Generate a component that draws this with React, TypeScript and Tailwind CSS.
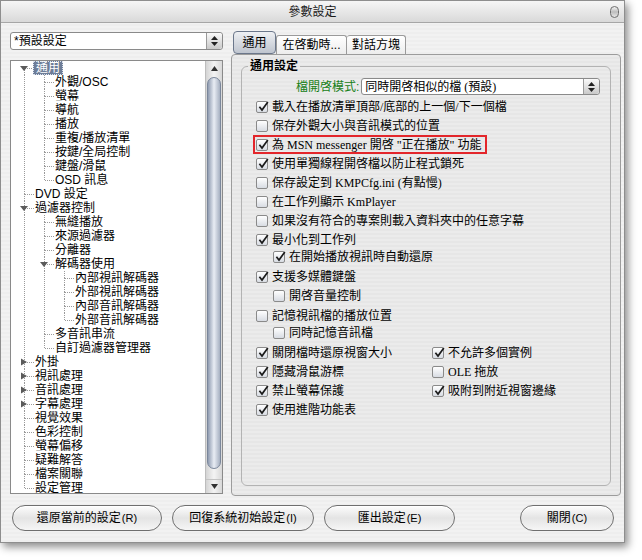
import React from "react";

type TreeNode = {
  label: string;
  level: number;
  arrow?: "down" | "right";
  selected?: boolean;
};

const tree: TreeNode[] = [
  { label: "通用", level: 0, arrow: "down", selected: true },
  { label: "外觀/OSC", level: 1 },
  { label: "螢幕", level: 1 },
  { label: "導航", level: 1 },
  { label: "播放", level: 1 },
  { label: "重複/播放清單", level: 1 },
  { label: "按鍵/全局控制", level: 1 },
  { label: "鍵盤/滑鼠", level: 1 },
  { label: "OSD 訊息", level: 1 },
  { label: "DVD 設定", level: 0 },
  { label: "過濾器控制", level: 0, arrow: "down" },
  { label: "無縫播放", level: 1 },
  { label: "來源過濾器", level: 1 },
  { label: "分離器", level: 1 },
  { label: "解碼器使用", level: 1, arrow: "down" },
  { label: "內部視訊解碼器", level: 2 },
  { label: "外部視訊解碼器", level: 2 },
  { label: "內部音訊解碼器", level: 2 },
  { label: "外部音訊解碼器", level: 2 },
  { label: "多音訊串流", level: 1 },
  { label: "自訂過濾器管理器", level: 1 },
  { label: "外掛", level: 0, arrow: "right" },
  { label: "視訊處理", level: 0, arrow: "right" },
  { label: "音訊處理", level: 0, arrow: "right" },
  { label: "字幕處理", level: 0, arrow: "right" },
  { label: "視覺效果", level: 0 },
  { label: "色彩控制", level: 0 },
  { label: "螢幕偏移", level: 0 },
  { label: "疑難解答", level: 0 },
  { label: "檔案關聯", level: 0 },
  { label: "設定管理", level: 0 },
];

function hasNext(i: number) {
  const lvl = tree[i].level;
  for (let j = i + 1; j < tree.length; j++) {
    if (tree[j].level < lvl) return false;
    if (tree[j].level === lvl) return true;
  }
  return false;
}

function ancestorAt(i: number, lvl: number) {
  for (let j = i - 1; j >= 0; j--) {
    if (tree[j].level === lvl) return j;
  }
  return -1;
}

const dot = { stroke: "#9a9a9a", strokeWidth: 1, strokeDasharray: "1 1" };

function GuideCell({ full }: { full: boolean }) {
  return (
    <svg width="20" height="14" className="shrink-0" shapeRendering="crispEdges">
      {full && <line x1="10.5" y1="0" x2="10.5" y2="14" {...dot} />}
    </svg>
  );
}

function OwnCell({ first, next, arrow }: { first: boolean; next: boolean; arrow?: "down" | "right" }) {
  return (
    <svg width="20" height="14" className="shrink-0" shapeRendering="crispEdges">
      {!first && <line x1="10.5" y1="0" x2="10.5" y2="7" {...dot} />}
      {next && <line x1="10.5" y1="7" x2="10.5" y2="14" {...dot} />}
      <line x1="11" y1="7.5" x2="20" y2="7.5" {...dot} />
      {arrow === "down" && (
        <polygon points="6,5 14,5 10,10" fill="#5b5b5b" shapeRendering="auto" />
      )}
      {arrow === "right" && (
        <polygon points="7,3.5 7,10.5 13,7" fill="#5b5b5b" shapeRendering="auto" />
      )}
    </svg>
  );
}

function TreeRow({ node, index }: { node: TreeNode; index: number }) {
  const cells = [];
  for (let l = 0; l < node.level; l++) {
    const a = ancestorAt(index, l);
    cells.push(<GuideCell key={l} full={a >= 0 && hasNext(a)} />);
  }
  return (
    <div className="flex h-[14px] items-center">
      {cells}
      <OwnCell first={index === 0} next={hasNext(index)} arrow={node.arrow} />
      {node.selected ? (
        <span className="-ml-[1px] flex h-[14px] items-center border border-dotted border-[#dde3ee] bg-[#6d7d98] px-[2px] leading-none text-white">
          {node.label}
        </span>
      ) : (
        <span className="ml-[1px] whitespace-nowrap leading-none">{node.label}</span>
      )}
    </div>
  );
}

function Stepper() {
  return (
    <span className="flex h-full w-[16px] flex-col items-center justify-center gap-[2px] rounded-r-[3px] border-l border-[#9a9a9a] bg-gradient-to-b from-[#fafafa] via-[#e2e2e2] to-[#c9c9c9]">
      <svg width="7" height="4" viewBox="0 0 7 4">
        <polygon points="0,4 7,4 3.5,0" fill="#222" />
      </svg>
      <svg width="7" height="4" viewBox="0 0 7 4">
        <polygon points="0,0 7,0 3.5,4" fill="#222" />
      </svg>
    </span>
  );
}

function Check({ on }: { on: boolean }) {
  return (
    <span className="relative flex h-[12px] w-[12px] shrink-0 rounded-[2px] border border-[#8a8a8a] bg-gradient-to-b from-[#ffffff] to-[#d8dce3]">
      {on && (
        <svg width="13" height="13" viewBox="0 0 13 13" className="absolute -top-[2px] left-[0px]">
          <path d="M2.4 6.8 L5 10 L10.8 2" fill="none" stroke="#1b1b1b" strokeWidth="1.7" />
        </svg>
      )}
    </span>
  );
}

function Opt({ on, label, sub, h = "h-[19px]" }: { on: boolean; label: string; sub?: boolean; h?: string }) {
  return (
    <div className={`flex ${h} items-center gap-[4px] whitespace-nowrap leading-none ${sub ? "pl-[17px]" : ""}`}>
      <Check on={on} />
      <span>{label}</span>
    </div>
  );
}

function AquaButton({ label, mark, w }: { label: string; mark: string; w: string }) {
  return (
    <button
      className={`${w} flex h-[26px] items-center justify-center rounded-[13px] border border-[#6f6f6f] bg-gradient-to-b from-[#fdfdfd] via-[#e4e4e4] to-[#f6f6f6] text-[12px] leading-none text-black shadow-[inset_0_1px_0_#ffffff]`}
    >
      {label}
      <span className="ml-[1px] text-[11px]">({mark})</span>
    </button>
  );
}

export default function App() {
  return (
    <div className="h-[560px] w-[642px] bg-white font-['Liberation_Sans','Noto_Sans_CJK_TC',sans-serif] text-[12px] text-black">
      <div className="flex h-[543px] w-[625px] flex-col border border-[#8e8e8e] bg-[image:repeating-linear-gradient(0deg,#eeeeee_0px,#eeeeee_2px,#f2f2f2_2px,#f2f2f2_4px)] shadow-[3px_4px_8px_rgba(0,0,0,0.45)]">
        {/* title bar */}
        <div className="grid h-[22px] shrink-0 grid-cols-[1fr_auto_1fr] items-center border-b border-[#a6a6a6] bg-gradient-to-b from-[#f6f6f6] to-[#d9d9d9]">
          <div />
          <div className="leading-none text-[#1a1a1a]">參數設定</div>
          <div className="flex justify-end pr-[5px]">
            <span className="h-[12px] w-[9px] rounded-full border border-[#6e6e6e] bg-gradient-to-b from-[#f2f2f2] via-[#bdbdbd] to-[#e8e8e8]" />
          </div>
        </div>

        {/* body */}
        <div className="flex pl-[9px] pr-[3px] pt-[9px]">
          {/* left column */}
          <div className="flex w-[213px] flex-col">
            <div className="flex h-[18px] items-center rounded-[3px] border border-[#8a8a8a] bg-white">
              <span className="flex-1 pl-[3px] leading-none">*預設設定</span>
              <Stepper />
            </div>
            <div className="mt-[10px] flex h-[434px] overflow-hidden border border-[#8a8a8a] bg-white">
              <div className="flex-1 pl-[3px]">
                {tree.map((n, i) => (
                  <TreeRow key={i} node={n} index={i} />
                ))}
              </div>
              <div className="flex w-[17px] flex-col border-l border-[#bdbdbd] bg-gradient-to-r from-[#d4d4d4] via-[#f4f4f4] to-[#d8d8d8]">
                <div className="flex h-[14px] items-center justify-center">
                  <svg width="7" height="5" viewBox="0 0 7 5">
                    <polygon points="0,5 7,5 3.5,0" fill="#333" />
                  </svg>
                </div>
                <div className="mx-[1px] mt-[2px] h-[392px] rounded-[8px] border border-[#7b879b] bg-gradient-to-r from-[#8f9bb0] via-[#e9edf4] to-[#a6b0c1]" />
                <div className="flex-1" />
                <div className="flex h-[14px] items-center justify-center border-t border-[#c4c4c4]">
                  <svg width="7" height="5" viewBox="0 0 7 5">
                    <polygon points="0,0 7,0 3.5,5" fill="#333" />
                  </svg>
                </div>
              </div>
            </div>
          </div>

          {/* right column */}
          <div className="ml-[8px] flex w-[390px] flex-col">
            <div className="flex h-[22px] items-end pl-[2px]">
              <div className="flex h-[23px] w-[43px] items-center justify-center rounded-[4px] border border-[#6b778b] bg-gradient-to-b from-[#eef0f3] to-[#bfc5cf] leading-none">
                通用
              </div>
              <div className="flex h-[19px] w-[71px] items-center justify-center rounded-t-[3px] border border-b-0 border-[#9a9a9a] bg-gradient-to-b from-white to-[#ededed] leading-none">
                在啓動時...
              </div>
              <div className="flex h-[19px] w-[59px] items-center justify-center rounded-t-[3px] border border-b-0 border-l-0 border-[#9a9a9a] bg-gradient-to-b from-white to-[#ededed] leading-none">
                對話方塊
              </div>
            </div>
            <div className="flex h-[442px] flex-col rounded-[4px] border border-[#9c9c9c] bg-[image:repeating-linear-gradient(0deg,#e6e6e6_0px,#e6e6e6_2px,#ebebeb_2px,#ebebeb_4px)]">
              <fieldset className="mx-[9px] mb-[9px] mt-[3px] flex-1 rounded-[6px] border border-[#b3b3b3] font-['Liberation_Serif','Noto_Sans_CJK_TC',serif]">
                <legend className="ml-[6px] px-[2px] font-['Liberation_Sans','Noto_Sans_CJK_TC',sans-serif] text-[12px] font-bold leading-[17px]">
                  通用設定
                </legend>
                <div className="pl-[14px]">
                  <div className="mt-[3px] flex h-[17px] items-center pl-[40px] pr-[10px]">
                    <span className="mr-[2px] whitespace-nowrap font-['Liberation_Sans','Noto_Sans_CJK_TC',sans-serif] leading-none text-[#178017]">
                      檔開啓模式:
                    </span>
                    <div className="flex h-[17px] flex-1 items-center rounded-[3px] border border-[#8a8a8a] bg-white">
                      <span className="flex-1 pl-[3px] leading-none">同時開啓相似的檔 (預設)</span>
                      <Stepper />
                    </div>
                  </div>
                  <div className="mt-[2px]">
                    <Opt on label="載入在播放清單頂部/底部的上一個/下一個檔" />
                    <Opt on={false} label="保存外觀大小與音訊模式的位置" />
                    <div className="flex h-[19px] items-center">
                      <div className="-ml-[1px] flex h-[15px] items-center gap-[4px] whitespace-nowrap pl-[1px] pr-[4px] leading-none outline-2 outline-[#e3262b]">
                        <Check on />
                        <span>為 MSN messenger 開啓 "正在播放" 功能</span>
                      </div>
                    </div>
                    <Opt on label="使用單獨線程開啓檔以防止程式鎖死" />
                    <Opt on={false} label="保存設定到 KMPCfg.ini (有點慢)" />
                    <Opt on={false} label="在工作列顯示 KmPlayer" />
                    <Opt on={false} label="如果沒有符合的專案則載入資料夾中的任意字幕" />
                    <Opt on label="最小化到工作列" />
                    <Opt on sub h="h-[15px]" label="在開始播放視訊時自動還原" />
                    <div className="mt-[3px]">
                      <Opt on label="支援多媒體鍵盤" />
                      <Opt on={false} sub label="開啓音量控制" />
                    </div>
                    <div className="mt-[1px]">
                      <Opt on={false} label="記憶視訊檔的播放位置" />
                      <Opt on={false} sub h="h-[15px]" label="同時記憶音訊檔" />
                    </div>
                    <div className="mt-[3px] grid grid-cols-[176px_1fr]">
                      <Opt on label="關閉檔時還原視窗大小" />
                      <Opt on label="不允許多個實例" />
                      <Opt on label="隱藏滑鼠游標" />
                      <Opt on={false} label="OLE 拖放" />
                      <Opt on label="禁止螢幕保護" />
                      <Opt on label="吸附到附近視窗邊緣" />
                      <Opt on label="使用進階功能表" />
                    </div>
                  </div>
                </div>
              </fieldset>
            </div>
          </div>
        </div>

        {/* buttons */}
        <div className="mt-[9px] flex pl-[11px] pr-[10px]">
          <AquaButton w="w-[150px]" label="還原當前的設定" mark="R" />
          <div className="ml-[10px]">
            <AquaButton w="w-[142px]" label="回復系統初始設定" mark="I" />
          </div>
          <div className="ml-[10px]">
            <AquaButton w="w-[131px]" label="匯出設定" mark="E" />
          </div>
          <div className="ml-auto">
            <AquaButton w="w-[94px]" label="關閉" mark="C" />
          </div>
        </div>
      </div>
    </div>
  );
}
